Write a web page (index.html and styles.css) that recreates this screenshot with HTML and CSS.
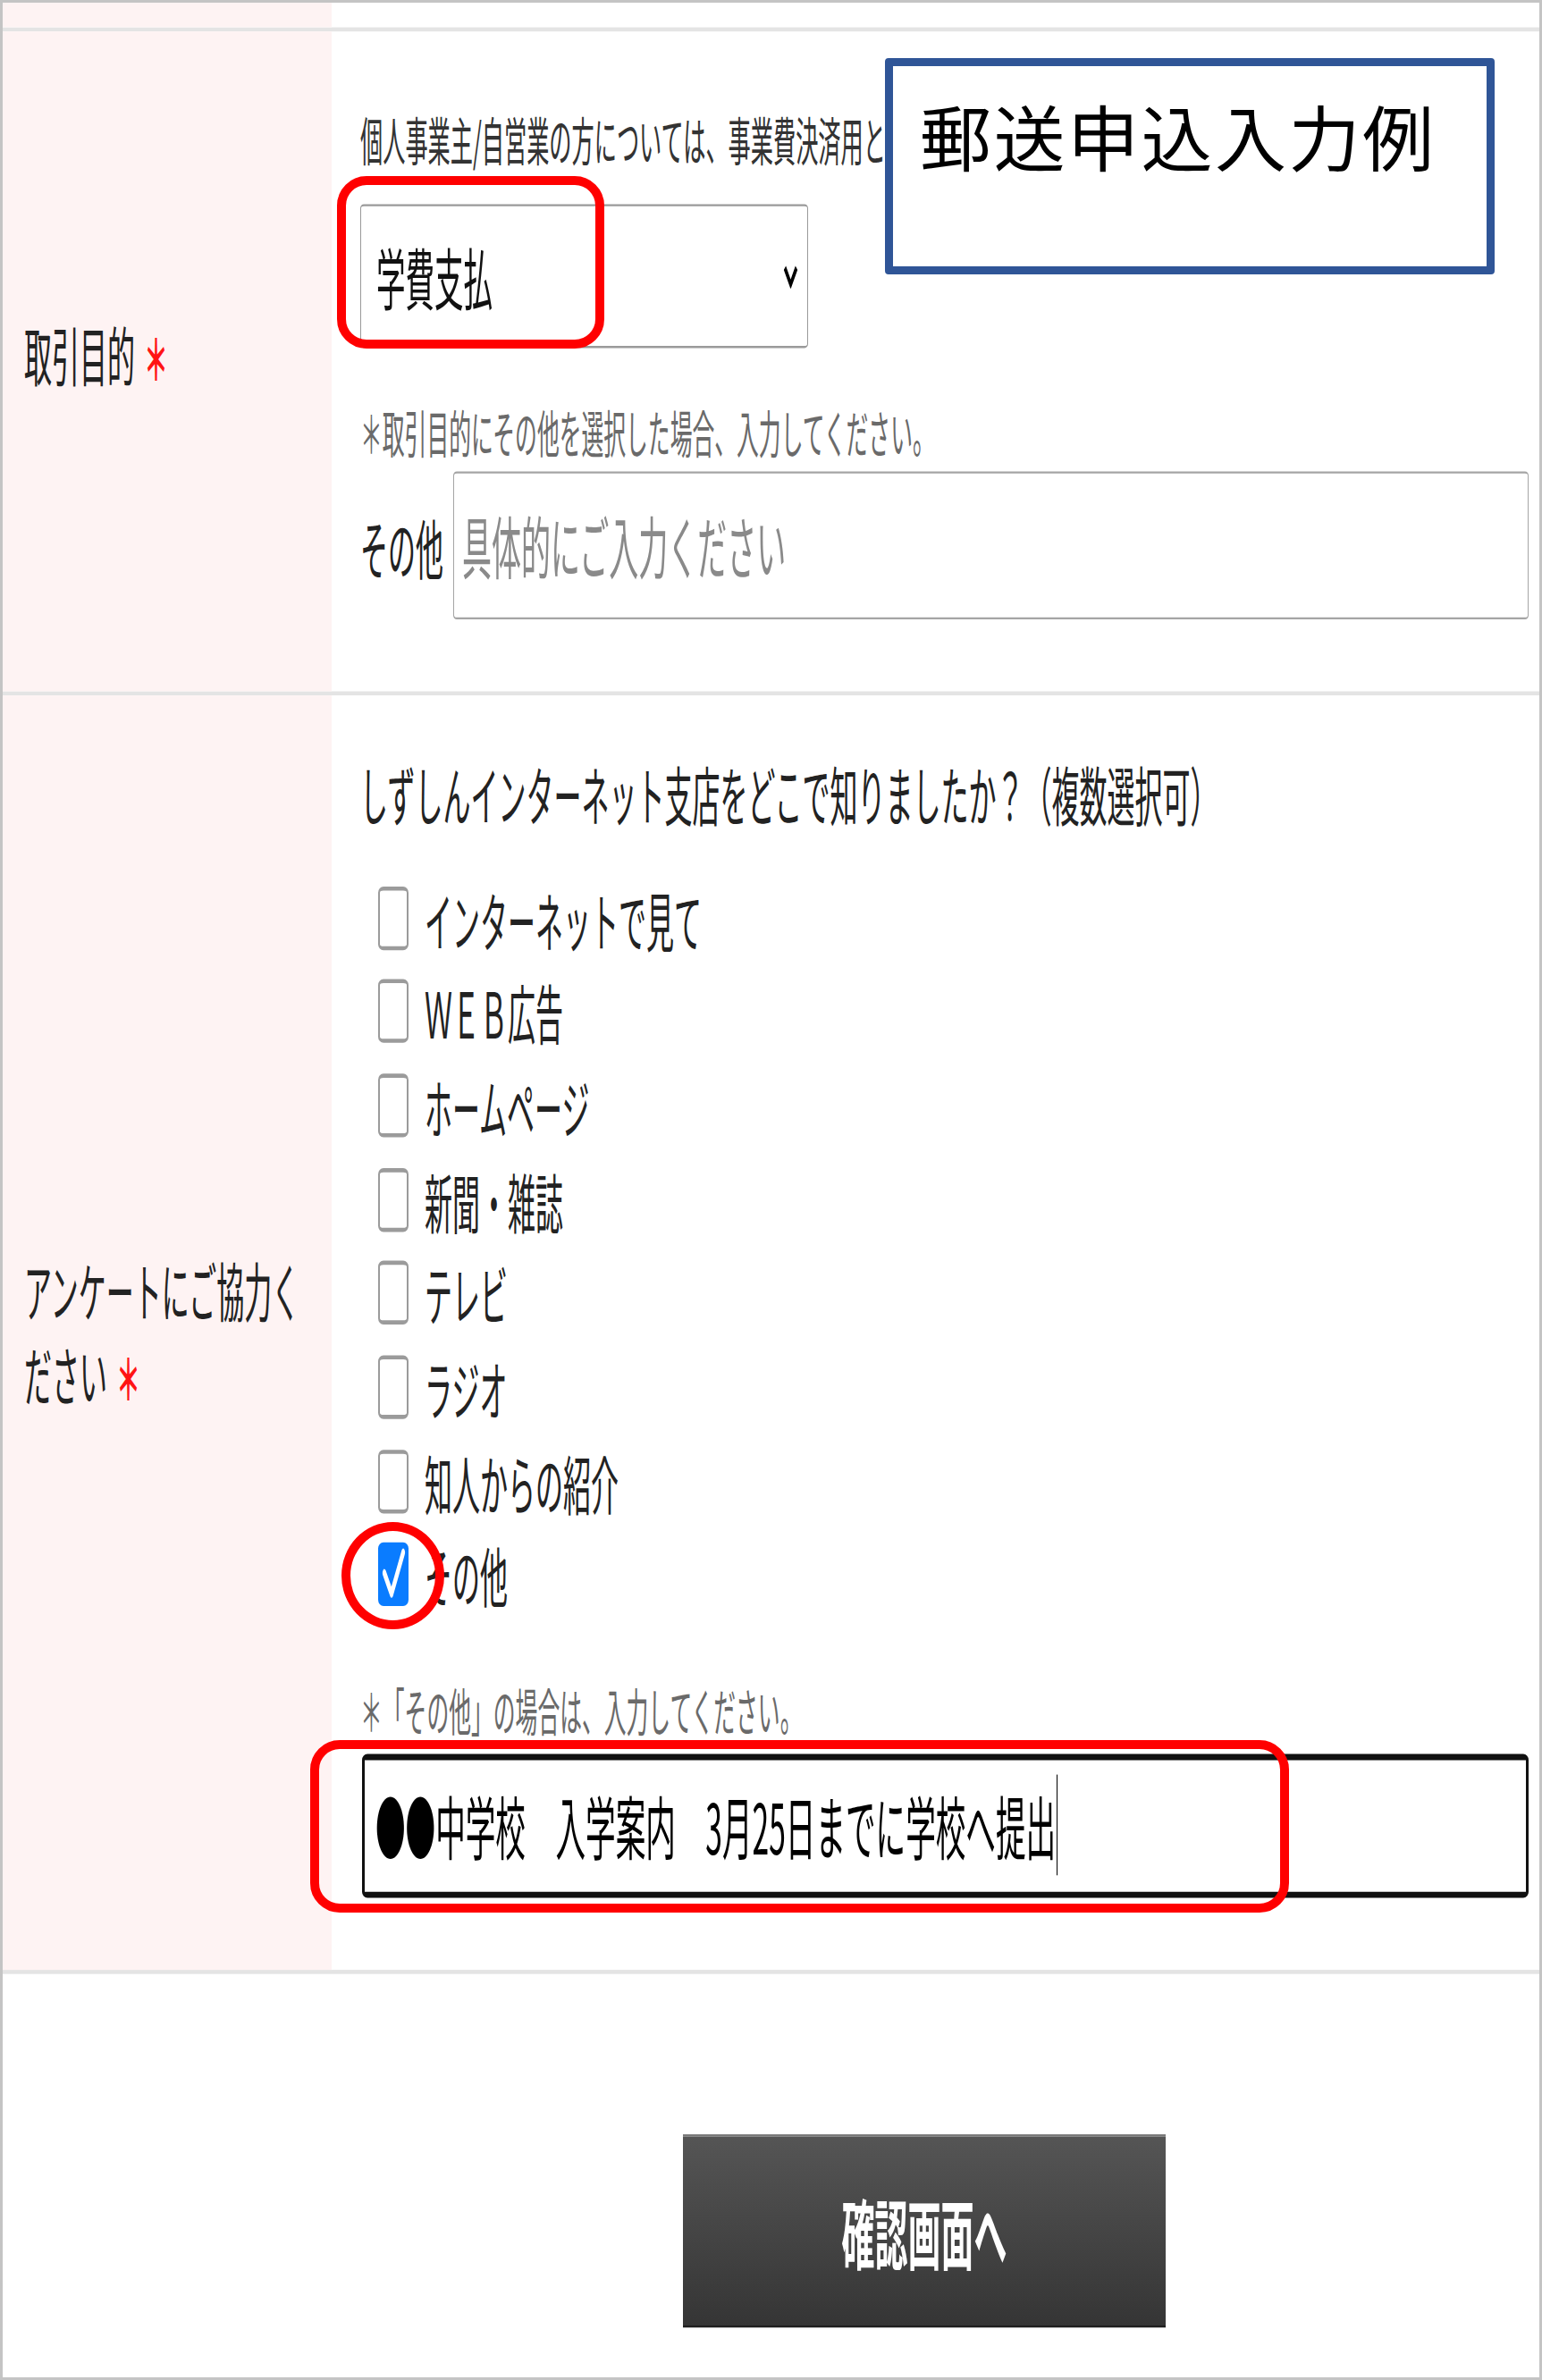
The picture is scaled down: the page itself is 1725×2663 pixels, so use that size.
FILE: index.html
```html
<!DOCTYPE html>
<html lang="ja">
<head>
    <meta charset="UTF-8">
    <title>郵送申込入力例</title>
    <link rel="stylesheet" href="styles.css">
</head>
<body>
<div class="page">
    <div class="sheet">
        <div class="row row_stub">
            <div class="row__head"></div>
            <div class="row__body"></div>
        </div>

        <div class="row row_purpose">
            <div class="row__head"><span class="row__label row__label_req">取引目的</span></div>
            <div class="row__body">
                <p class="row__desc">個人事業主/自営業の方については、事業費決済用と</p>
                <div class="select">
                    <span class="select__value">学費支払</span>
                    <svg class="select__arrow" width="19" height="12" viewBox="0 0 19 12" preserveAspectRatio="none">
                        <path d="M3 2 L9.5 10 L16 2" fill="none" stroke="#000" stroke-width="3"/>
                    </svg>
                </div>
                <p class="row__note">＊取引目的にその他を選択した場合、入力してください。</p>
                <div class="other">
                    <label for="purpose-other" class="other__label">その他</label>
                    <input type="text" id="purpose-other" class="field" placeholder="具体的にご入力ください">
                </div>
            </div>
        </div>

        <div class="row row_survey">
            <div class="row__head"><span class="row__label row__label_req">アンケートにご協力ください</span></div>
            <div class="row__body">
                <p class="row__question">しずしんインターネット支店をどこで知りましたか？（複数選択可）</p>
                <ul class="checks">
                    <li class="checks__item"><span class="checks__box"></span>インターネットで見て</li>
                    <li class="checks__item"><span class="checks__box"></span>ＷＥＢ広告</li>
                    <li class="checks__item"><span class="checks__box"></span>ホームページ</li>
                    <li class="checks__item"><span class="checks__box"></span>新聞・雑誌</li>
                    <li class="checks__item"><span class="checks__box"></span>テレビ</li>
                    <li class="checks__item"><span class="checks__box"></span>ラジオ</li>
                    <li class="checks__item"><span class="checks__box"></span>知人からの紹介</li>
                    <li class="checks__item">
                        <span class="checks__box checks__box_on">
                            <svg width="30" height="27" viewBox="0 0 30 27" preserveAspectRatio="none">
                                <path d="M5 13 L13 23 L26 3" fill="none" stroke="#fff" stroke-width="4" stroke-linecap="round" stroke-linejoin="round"/>
                            </svg>
                        </span>その他
                    </li>
                </ul>
                <p class="row__note">＊「その他」の場合は、入力してください。</p>
                <div class="field field_filled">●●中学校　入学案内　3月25日までに学校へ提出<span class="caret"></span></div>
            </div>
        </div>

        <div class="actions">
            <button class="btn">確認画面へ</button>
        </div>
    </div>

    <div class="callout">郵送申込入力例</div>
    <div class="mark mark_select"></div>
    <div class="mark mark_check"></div>
    <div class="mark mark_field"></div>
</div>
</body>
</html>
```

FILE: styles.css
```css
* {
    box-sizing: border-box;
}
body {
    margin: 0;
    background: #fff;
    color: #222;
    font-family: "Noto Sans CJK JP", "Noto Sans", sans-serif;
}
.page {
    position: relative;
    width: 1725px;
    height: 2663px;
    border: 3px solid #c4c4c4;
    overflow: hidden;
    background: #fff;
}
/* the form screenshot is stretched vertically */
.sheet {
    transform: scaleY(2.3);
    transform-origin: 0 0;
}
.row {
    display: flex;
    border-top: 2px solid #e4e4e4;
}
.row_stub {
    height: 12px;
    border-top: 0;
}
.row__head {
    flex: 0 0 368px;
    display: flex;
    align-items: center;
    padding: 0 24px;
    background: #fef3f3;
    font-size: 31px;
    line-height: 41px;
}
.row_purpose .row__head {
    padding-bottom: 6px;
}
.row__label_req::after {
    content: "＊";
    margin-left: 10px;
    color: #ff1414;
    font-size: 27px;
    font-weight: 700;
}
.row__body {
    flex: 1;
    padding: 0 12px 0 32px;
}
.row_purpose .row__body {
    padding-top: 36.5px;
    padding-bottom: 35.2px;
}
.row_survey .row__body {
    padding-top: 31px;
    padding-bottom: 35.6px;
}
.row__desc {
    margin: 0;
    color: #333;
    font-size: 25.2px;
    line-height: 30px;
    white-space: nowrap;
}
.row__note {
    margin: 25.8px 0 0;
    color: #6a6a6a;
    font-size: 24.8px;
    line-height: 30px;
}
.row_survey .row__note {
    margin-top: 27.8px;
}
.row__question {
    margin: 0;
    font-size: 31px;
    line-height: 34px;
}
.row_survey .checks {
    margin-top: 20.5px;
}
.select {
    display: flex;
    align-items: center;
    justify-content: space-between;
    width: 501px;
    height: 69.6px;
    margin-top: 17.6px;
    padding: 0 9px 0 17px;
    border: 1px solid #9a9a9a;
    border-radius: 4px / 2px;
    color: #111;
    font-size: 32.5px;
}
.other {
    display: flex;
    align-items: center;
    margin-top: 5px;
}
.other__label {
    margin-right: 11px;
    font-size: 31px;
}
.field {
    flex: 1;
    height: 71.3px;
    padding: 0 9px;
    border: 1px solid #a5a5a5;
    border-radius: 4px / 2px;
    font-family: inherit;
    font-size: 33px;
    color: #000;
    outline: none;
}
.field::placeholder {
    color: #8a8a8a;
}
.field_filled {
    display: flex;
    align-items: center;
    height: 70px;
    margin: 6.3px 0 0 2px;
    padding: 0 12px;
    border: 3px solid #111;
    border-radius: 6px / 3px;
    font-size: 33.6px;
}
.caret {
    width: 1px;
    height: 48.7px;
    margin-left: 1px;
    background: #000;
}
.checks {
    margin: 19.4px 0 0;
    padding: 0 0 0 20px;
    list-style: none;
}
.checks__item {
    display: flex;
    align-items: center;
    height: 45.65px;
    font-size: 31px;
}
.checks__box {
    width: 34px;
    height: 31px;
    margin-right: 18px;
    border: 2px solid #9b9b9b;
    border-radius: 6px / 3px;
    background: #fff;
}
.checks__box svg {
    display: block;
}
.checks__box_on {
    border-color: #0a7cff;
    background: #0a7cff;
}
.actions {
    height: 193.7px;
    padding: 77.4px 0 0 761px;
    border-top: 2px solid #e4e4e4;
}
.btn {
    width: 540px;
    height: 94.8px;
    border: 0;
    border-top: 1px solid #777;
    border-bottom: 1px solid #1e1e1e;
    background: linear-gradient(#555, #353535);
    color: #fff;
    font-family: inherit;
    font-size: 37px;
    font-weight: 700;
    cursor: pointer;
}
/* annotations drawn over the screenshot */
.callout {
    position: absolute;
    left: 987px;
    top: 62px;
    width: 682px;
    height: 242px;
    padding: 36px 0 0 30px;
    border: 9px solid #2f5597;
    border-radius: 4px;
    background: #fff;
    color: #000;
    font-size: 80px;
    line-height: 80px;
    letter-spacing: 2.5px;
}
.mark {
    position: absolute;
    border: 10px solid #ff0000;
    border-radius: 33px;
}
.mark_select {
    left: 374px;
    top: 194px;
    width: 299px;
    height: 193px;
}
.mark_check {
    left: 379px;
    top: 1700px;
    width: 115px;
    height: 120px;
    border-radius: 50%;
}
.mark_field {
    left: 344px;
    top: 1944px;
    width: 1095px;
    height: 193px;
}
```
